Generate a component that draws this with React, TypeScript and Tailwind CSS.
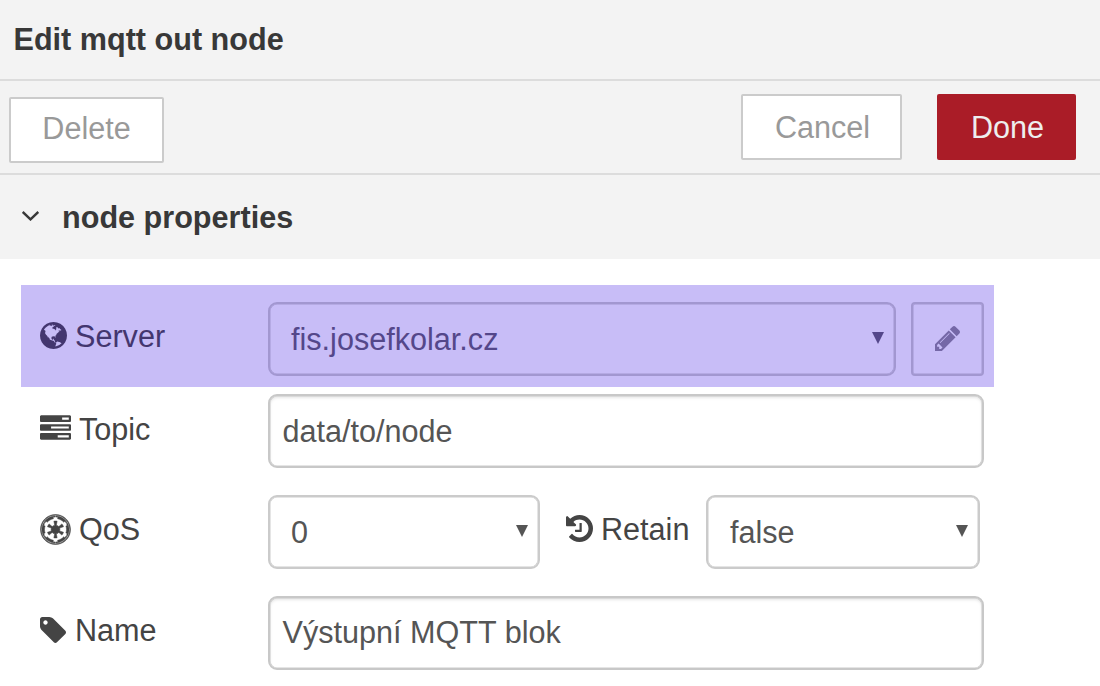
import type { ReactNode } from "react";
import { FaEmpire } from "react-icons/fa";

const GLOBE =
  "M768 128q209 0 385.5 103t279.5 279.5 103 385.5-103 385.5-279.5 279.5-385.5 103-385.5-103-279.5-279.5-103-385.5 103-385.5 279.5-279.5 385.5-103zm274 521q-2 1-9.5 9.5t-13.5 9.5q2 0 4.5-5t5-11 3.5-7q6-7 22-15 14-6 52-12 34-8 51 11-2-2 9.5-13t14.5-12q3-2 15-4.5t15-7.5l2-22q-12 1-17.5-7t-6.5-21q0 2-6 8 0-7-4.5-8t-11.5 1-9 1q-10-3-15-7.5t-8-16.5-4-15q-2-5-9.5-11t-9.5-10q-1-2-2.5-5.5t-3-6.5-4-5.5-5.5-2.5-7 5-7.5 10-4.5 5q-3-2-6-1.5t-4.5 1-4.5 3-5 3.5q-3 2-8.5 3t-8.5 2q15-5-1-11-10-4-16-3 9-4 7.5-12t-8.5-14h5q-1-4-8.5-8.5t-17.5-8.5-13-6q-8-5-34-9.5t-33-.5q-5 6-4.5 10.5t4 14 3.5 12.5q1 6-5.5 13t-6.5 12q0 7 14 15.5t10 21.5q-3 8-16 16t-16 12q-5 8-1.5 18.5t10.5 16.5q2 2 1.5 4t-3.5 4.5-5.5 4-6.5 3.5l-3 2q-11 5-20.5-6t-13.5-26q-7-25-16-30-23-8-29 1-5-13-41-26-25-9-58-4 6-1 0-15-7-15-19-12 3-6 4-17.5t1-13.5q3-13 12-23 1-1 7-8.5t9.5-13.5.5-6q35 4 50-11 5-5 11.5-17t10.5-17q9-6 14-5.5t14.5 5.5 14.5 5q14 1 15.5-11t-7.5-20q12 1 3-17-4-7-8-9-12-4-27 5-8 4 2 8-1-1-9.5 10.5t-16.5 17.5-16-5q-1-1-5.5-13.5t-9.5-13.5q-8 0-16 15 3-8-11-15t-24-8q19-12-8-27-7-4-20.5-5t-19.5 4q-5 7-5.5 11.5t5 8 10.5 5.5 11.5 4 8.5 3q14 10 8 14-2 1-8.5 3.5t-11.5 4.5-6 4q-3 4 0 14t-2 14q-5-5-9-17.5t-7-16.5q7 9-25 6l-10-1q-4 0-16 2t-20.5 1-13.5-8q-4-8 0-20 1-4 4-2-4-3-11-9.5t-10-8.5q-46 15-94 41 6 1 12-1 5-2 13-6.5t10-5.5q34-14 42-7l5-5q14 16 20 25-7-4-30-1-20 6-22 12 7 12 5 18-4-3-11.5-10t-14.5-11-15-5q-16 0-22 1-146 80-235 222 7 7 12 8 4 1 5 9t2.5 11 11.5-3q9 8 3 19 1-1 44 27 19 17 21 21 3 11-10 18-1-2-9-9t-9-4q-3 5 .5 18.5t10.5 12.5q-7 0-9.5 16t-2.5 35.5-1 23.5l2 1q-3 12 5.5 34.5t21.5 19.5q-13 3 20 43 6 8 8 9 3 2 12 7.5t15 10 10 10.5q4 5 10 22.5t14 23.5q-2 6 9.5 20t10.5 23q-1 0-2.5 1t-2.5 1q3 7 15.5 14t15.5 13q1 3 2 10t3 11 8 2q2-20-24-62-15-25-17-29-3-5-5.5-15.5t-4.5-14.5q2 0 6 1.5t8.5 3.5 7.5 4 2 3q-3 7 2 17.5t12 18.5 17 19 12 13q6 6 14 19.5t0 13.5q9 0 20 10.5t17 19.5q5 8 8 26t5 24q2 7 8.5 13.5t12.5 9.5l16 8 13 7q5 2 18.5 10.5t21.5 11.5q10 4 16 4t14.5-2.5 13.5-3.5q15-2 29 15t21 21q36 19 55 11-2 1 .5 7.5t8 15.5 9 14.5 5.5 8.5q5 6 18 15t18 15q6-4 7-9-3 8 7 20t18 10q14-3 14-32-31 15-49-18 0-1-2.5-5.5t-4-8.5-2.5-8.5 0-7.5 5-3q9 0 10-3.5t-2-12.5-4-13q-1-8-11-20t-12-15q-5 9-16 8t-16-9q0 1-1.5 5.5t-1.5 6.5q-13 0-15-1 1-3 2.5-17.5t3.5-22.5q1-4 5.5-12t7.5-14.5 4-12.5-4.5-9.5-17.5-2.5q-19 1-26 20-1 3-3 10.5t-5 11.5-9 7q-7 3-24 2t-24-5q-13-8-22.5-29t-9.5-37q0-10 2.5-26.5t3-25-5.5-24.5q3-2 9-9.5t10-10.5q2-1 4.5-1.5t4.5 0 4-1.5 3-6q-1-1-4-3-3-3-4-3 7 3 28.5-1.5t27.5 1.5q15 11 22-2 0-1-2.5-9.5t-.5-13.5q5 27 29 9 3 3 15.5 5t17.5 5q3 2 7 5.5t5.5 4.5 5-.5 8.5-6.5q10 14 12 24 11 40 19 44 7 3 11 2t4.5-9.5 0-14-1.5-12.5l-1-8v-18l-1-8q-15-3-18.5-12t1.5-18.5 15-18.5q1-1 8-3.5t15.5-6.5 12.5-8q21-19 15-35 7 0 11-9-1 0-5-3t-7.5-5-4.5-2q9-5 2-16 5-3 7.5-11t7.5-10q9 12 21 2 7-8 1-16 5-7 20.5-10.5t18.5-9.5q7 2 8-2t1-12 3-12q4-5 15-9t13-5l17-11q3-4 0-4 18 2 31-11 10-11-6-20 3-6-3-9.5t-15-5.5q3-1 11.5-.5t10.5-1.5q15-10-7-16-17-5-43 12zm-163 877q206-36 351-189-3-3-12.5-4.5t-12.5-3.5q-18-7-24-8 1-7-2.5-13t-8-9-12.5-8-11-7q-2-2-7-6t-7-5.5-7.5-4.5-8.5-2-10 1l-3 1q-3 1-5.5 2.5t-5.5 3-4 3 0 2.5q-21-17-36-22-5-1-11-5.5t-10.5-7-10-1.5-11.5 7q-5 5-6 15t-2 13q-7-5 0-17.5t2-18.5q-3-6-10.5-4.5t-12 4.5-11.5 8.5-9 6.5-8.5 5.5-8.5 7.5q-3 4-6 12t-5 11q-2-4-11.5-6.5t-9.5-5.5q2 10 4 35t5 38q7 31-12 48-27 25-29 40-4 22 12 26 0 7-8 20.5t-7 21.5q0 6 2 16z";
const TASKS =
  "M1024 1408h640v-128h-640v128zm-384-512h1024v-128h-1024v128zm640-512h384v-128h-384v128zm512 832v256q0 26-19 45t-45 19h-1664q-26 0-45-19t-19-45v-256q0-26 19-45t45-19h1664q26 0 45 19t19 45zm0-512v256q0 26-19 45t-45 19h-1664q-26 0-45-19t-19-45v-256q0-26 19-45t45-19h1664q26 0 45 19t19 45zm0-512v256q0 26-19 45t-45 19h-1664q-26 0-45-19t-19-45v-256q0-26 19-45t45-19h1664q26 0 45 19t19 45z";
const HISTORY =
  "M1664 896q0 156-61 298t-164 245-245 164-298 61q-172 0-327-72.5t-264-204.5q-7-10-6.5-22.5t8.5-20.5l137-138q10-9 25-9 16 2 23 12 73 95 179 147t225 52q104 0 198.5-40.5t163.5-109.5 109.5-163.5 40.5-198.5-40.5-198.5-109.5-163.5-163.5-109.5-198.5-40.5q-98 0-188 35.5t-160 101.5l137 138q31 30 14 69-17 40-59 40h-448q-26 0-45-19t-19-45v-448q0-42 40-59 39-17 69 14l130 129q107-101 244.5-156.5t284.5-55.5q156 0 298 61t245 164 164 245 61 298zm-640-288v448q0 14-9 23t-23 9h-320q-14 0-23-9t-9-23v-64q0-14 9-23t23-9h224v-352q0-14 9-23t23-9h64q14 0 23 9t9 23z";
const TAG =
  "M576 448q0-53-37.5-90.5t-90.5-37.5-90.5 37.5-37.5 90.5 37.5 90.5 90.5 37.5 90.5-37.5 37.5-90.5zm1067 576q0 53-37 90l-491 492q-39 37-91 37-53 0-90-37l-715-716q-38-37-64.5-101t-26.5-117v-416q0-52 38-90t90-38h416q53 0 117 26.5t102 64.5l715 714q37 39 37 91z";
const PENCIL =
  "M491 1536l91-91-235-235-91 91v107h128v128h107zm523-928q0-22-22-22-10 0-17 7l-542 542q-7 7-7 17 0 22 22 22 10 0 17-7l542-542q7-7 7-17zm-54-192l416 416-832 832h-416v-416zm683 96q0 53-37 90l-166 166-416-416 166-165q36-38 90-38 53 0 91 38l235 234q37 39 37 91z";

function Glyph({ d, viewBox, className }: { d: string; viewBox: string; className: string }) {
  return (
    <svg viewBox={viewBox} className={className} fill="currentColor" aria-hidden="true">
      <path d={d} />
    </svg>
  );
}

function Arrow() {
  return (
    <svg viewBox="0 0 12 12" className="mb-[3px] h-3 w-3 shrink-0" fill="currentColor" aria-hidden="true">
      <path d="M0 0H12L6 12Z" />
    </svg>
  );
}

function Select({ value, className }: { value: string; className: string }) {
  return (
    <div
      className={`flex h-[74px] items-center justify-between rounded-[9px] border-2 pr-[10.5px] ${className}`}
    >
      <span className="pb-px">{value}</span>
      <Arrow />
    </div>
  );
}

function TextField({ value }: { value: string }) {
  return (
    <div className="flex h-[74px] w-[716px] items-center rounded-[9px] border-2 border-[#c8c8c8] bg-white pb-px pl-[12.5px] text-[#555] shadow-[inset_0_0_0_0.5px_#cbcbcb,inset_0_2px_3px_rgba(0,0,0,0.1)]">
      {value}
    </div>
  );
}

function Label({ icon, children, className }: { icon: ReactNode; children: string; className: string }) {
  return (
    <div className={`flex items-center ${className}`}>
      {icon}
      <span>{children}</span>
    </div>
  );
}

export default function App() {
  return (
    <div className="h-[686px] w-[1100px] overflow-hidden bg-white font-['Liberation_Sans',Arial,sans-serif] text-[30.6px] leading-[44px] text-[#444]">
      <header className="flex h-[81px] items-center border-b-2 border-[#dcdcdc] bg-[#f3f3f3] pb-[2px] pl-[13.5px] font-bold text-[#383838]">
        <h1>Edit mqtt out node</h1>
      </header>

      <div className="flex h-[94px] items-start border-b-2 border-[#dcdcdc] bg-[#f3f3f3] pt-[13px] pr-6 pl-[9px] text-[#999]">
        <button className="mt-[2.5px] h-[66px] w-[155px] rounded-[2px] border-2 border-[#cbcbcb] bg-white pb-[3px]">Delete</button>
        <button className="ml-auto h-[66px] w-[161px] rounded-[2px] border-2 border-[#cbcbcb] bg-white pb-px pl-[2px]">Cancel</button>
        <button className="ml-[35px] h-[66px] w-[139px] rounded-[2px] bg-[#aa1c27] pb-px pl-[2px] text-[#eee]">Done</button>
      </div>

      <section>
        <div className="flex h-[84px] items-center bg-[#f3f3f3] pl-[22px] font-bold text-[#383838]">
          <svg viewBox="0 0 17 10" className="mb-[2px] h-[10px] w-[17px]" fill="none" stroke="currentColor" strokeWidth="2.4" aria-hidden="true">
            <path d="M0.7 0.9L8.5 8.4L16.3 0.9" />
          </svg>
          <h2 className="ml-[23px]">node properties</h2>
        </div>

        <div className="pt-[26px] pl-[21px]">
          <div className="flex h-[102px] w-[973px] items-center bg-[#c8bdf7] pl-[19px] text-[#54478a]">
            <Label
              className="w-[228px] text-[#43366f]"
              icon={<Glyph d={GLOBE} viewBox="0 128 1536 1536" className="mr-2 mb-px h-[27px] w-[27px]" />}
            >
              Server
            </Label>
            <Select value="fis.josefkolar.cz" className="mt-[6px] w-[628px] border-[#a297d0] pl-[21px] shadow-[inset_0_0_0_0.5px_#a297d0]" />
            <button className="mt-[6px] ml-[15px] flex h-[74px] w-[73px] items-center justify-center rounded-[4px] border-2 border-[#a297d0] text-[#7568a7] shadow-[inset_0_0_0_0.5px_#a297d0]">
              <Glyph d={PENCIL} viewBox="128 149 1515 1515" className="mr-px mb-px h-[25px] w-[25px]" />
            </button>
          </div>

          <div className="mt-[7px] flex h-[74px] items-center pl-[19px]">
            <Label
              className="w-[228px] pb-[4px]"
              icon={<Glyph d={TASKS} viewBox="0 128 1792 1408" className="mr-2 mb-[3px] h-[25px] w-[31px]" />}
            >
              Topic
            </Label>
            <TextField value="data/to/node" />
          </div>

          <div className="mt-[27px] flex h-[74px] items-center pl-[19px]">
            <Label className="w-[228px] pb-[6px]" icon={<FaEmpire className="mr-2 h-[31px] w-[31px] stroke-current stroke-[8px]" />}>
              QoS
            </Label>
            <Select value="0" className="w-[272px] border-[#cbcbcb] pl-[21px] text-[#555] shadow-[inset_0_0_0_0.5px_#cbcbcb]" />
            <Label
              className="ml-[26px] w-[140px] pb-[6px]"
              icon={<Glyph d={HISTORY} viewBox="128 128 1536 1536" className="mr-2 mb-px h-[27px] w-[27px]" />}
            >
              Retain
            </Label>
            <Select value="false" className="w-[274px] border-[#cbcbcb] pl-[22px] text-[#555] shadow-[inset_0_0_0_0.5px_#cbcbcb]" />
          </div>

          <div className="mt-[26.5px] flex h-[74px] items-center pl-[19px]">
            <Label
              className="w-[228px] pb-[5px]"
              icon={<Glyph d={TAG} viewBox="128 128 1515 1515" className="mr-[9px] h-[26px] w-[26px]" />}
            >
              Name
            </Label>
            <TextField value="Výstupní MQTT blok" />
          </div>
        </div>
      </section>
    </div>
  );
}
